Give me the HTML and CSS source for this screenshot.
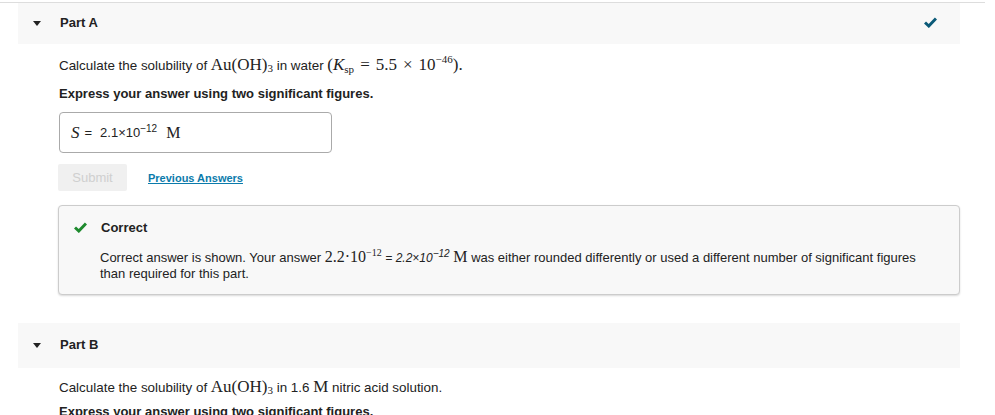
FILE: index.html
```html
<!DOCTYPE html>
<html>
<head>
<meta charset="utf-8">
<link rel="stylesheet" href="styles.css">
</head>
<body>
<div class="page">
  <section class="part">
    <div class="part-head">
      <span class="caret"></span>
      <span class="part-title">Part A</span>
      <svg class="done" width="13" height="11" viewBox="0 0 13 11"><path d="M1 5.5 L4.8 9 L12 1.5" fill="none" stroke="#0b5a78" stroke-width="3" stroke-linejoin="miter"/></svg>
    </div>
    <div class="part-body">
      <p class="q">Calculate the solubility of <span class="m">Au(OH)<sub>3</sub></span> in water <span class="m">(<i>K</i><sub class="sp">sp</sub><span class="op">=</span>5.5<span class="op">×</span>10<sup>−46</sup>).</span></p>
      <p class="instr">Express your answer using two significant figures.</p>
      <div class="answer">
        <span class="m"><i>S</i></span><span class="eq">=</span><span class="val">2.1×10<sup>−12</sup></span><span class="m unit">M</span>
      </div>
      <div class="actions">
        <button class="submit">Submit</button>
        <a class="prev" href="#">Previous Answers</a>
      </div>
      <div class="feedback">
        <div class="fb-head">
          <svg class="ok" width="13" height="11" viewBox="0 0 13 11"><path d="M1 5.5 L4.8 9 L12 1.5" fill="none" stroke="#1e8a2e" stroke-width="3"/></svg>
          <span class="fb-title">Correct</span>
        </div>
        <p class="fb-text">Correct answer is shown. Your answer <span class="m">2.2·10<sup>−12</sup></span> <span class="it">= 2.2×10<sup>−12</sup></span> <span class="m">M</span> was either rounded differently or used a different number of significant figures than required for this part.</p>
      </div>
    </div>
  </section>
  <section class="part partb">
    <div class="part-head">
      <span class="caret"></span>
      <span class="part-title">Part B</span>
    </div>
    <div class="part-body">
      <p class="q">Calculate the solubility of <span class="m">Au(OH)<sub>3</sub></span> in 1.6 <span class="m">M</span> nitric acid solution.</p>
      <p class="instr">Express your answer using two significant figures.</p>
    </div>
  </section>
</div>
</body>
</html>
```

FILE: styles.css
```css
html, body {
  margin: 0;
  padding: 0;
  background: #fff;
}
body {
  font-family: "Liberation Sans", Arial, sans-serif;
  font-size: 13px;
  color: #222;
}
sub, sup { line-height: 0; }
.page {
  width: 985px;
  border-top: 1px solid #dddddd;
  margin-top: 2px;
}
.part {
  width: 942px;
  margin-left: 18px;
}
.part-head {
  height: 41px;
  background: #f8f8f8;
  display: flex;
  align-items: center;
}
.caret {
  width: 0;
  height: 0;
  border-left: 4px solid transparent;
  border-right: 4px solid transparent;
  border-top: 5px solid #222;
  margin-left: 15px;
  margin-right: 19px;
}
.part-title {
  font-weight: bold;
  font-size: 13px;
  flex: 1;
  margin-top: -3px;
}
.done {
  margin-right: 23px;
  margin-top: -2px;
}
.part-body {
  padding-left: 41px;
}
p { margin: 0; }
.q {
  padding-top: 12px;
  line-height: 20px;
  font-size: 13.4px;
}
.m {
  font-family: "Liberation Serif", "Times New Roman", serif;
  font-size: 17px;
  line-height: 1;
}
.m sub, .m sup {
  font-size: 11px;
}
.m sub { vertical-align: -2px; }
.m sup { vertical-align: 7px; }
.m .sp { font-size: 11px; vertical-align: -3px; }
.op { margin: 0 6px; }
.instr {
  font-weight: bold;
  font-size: 13px;
  margin-top: 10px;
  line-height: 16px;
}
.answer {
  margin-top: 10px;
  width: 260px;
  height: 39px;
  border: 1px solid #aaaaaa;
  border-radius: 4px;
  display: flex;
  align-items: center;
  padding-left: 11px;
  box-sizing: content-box;
}
.answer .eq { margin-left: 5px; margin-right: 8px; font-size: 13px; }
.answer .val { font-size: 13px; }
.answer .val sup { font-size: 10px; vertical-align: 5px; }
.answer .unit { margin-left: 9px; font-size: 16px; }
.actions {
  display: flex;
  align-items: center;
  margin-top: 11px;
}
.submit {
  width: 69px;
  height: 27px;
  background: #f0f0f0;
  border: none;
  border-radius: 2px;
  color: #cfcfcf;
  font-family: "Liberation Sans", Arial, sans-serif;
  font-size: 13px;
  padding: 0;
  margin-left: -1px;
}
.prev {
  margin-left: 21px;
  color: #0b7bab;
  font-weight: bold;
  font-size: 11px;
  text-decoration: underline;
}
.feedback {
  margin-top: 14px;
  margin-left: -1px;
  width: 900px;
  height: 88px;
  border: 1px solid #cccccc;
  border-radius: 4px;
  background: #f8f8f8;
  box-shadow: 0 1px 2px rgba(0,0,0,0.15);
  box-sizing: content-box;
}
.fb-head {
  display: flex;
  align-items: center;
  padding-top: 12px;
  padding-left: 15px;
  height: 18px;
}
.ok { margin-right: 14px; }
.fb-title {
  font-weight: bold;
  font-size: 13px;
}
.fb-text {
  margin-top: 13px;
  padding-left: 41px;
  padding-right: 28px;
  font-size: 13px;
  line-height: 15px;
}
.fb-text .m { font-size: 16px; }
.fb-text .m sup { font-size: 10px; vertical-align: 6px; }
.fb-text .it { font-style: italic; font-size: 12px; }
.fb-text .it sup { font-size: 10px; vertical-align: 5px; }
.partb {
  margin-top: 28px;
}
.partb .part-head {
  height: 45px;
}
.partb .q { padding-top: 10px; }
.partb .instr { margin-top: 6px; }
```
